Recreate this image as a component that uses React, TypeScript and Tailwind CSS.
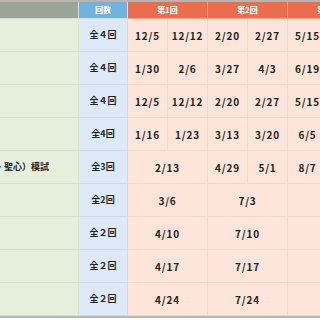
import React from 'react';

type Cell = { text?: string; span?: number };
type Row = { count: string; label?: string; first: Cell[]; second: Cell[]; third: Cell[] };

const rows: Row[] = [
  { count: '全４回', first: [{ text: '12/5' }, { text: '12/12' }], second: [{ text: '2/20' }, { text: '2/27' }], third: [{ text: '5/15' }, {}] },
  { count: '全４回', first: [{ text: '1/30' }, { text: '2/6' }], second: [{ text: '3/27' }, { text: '4/3' }], third: [{ text: '6/19' }, {}] },
  { count: '全４回', first: [{ text: '12/5' }, { text: '12/12' }], second: [{ text: '2/20' }, { text: '2/27' }], third: [{ text: '5/15' }, {}] },
  { count: '全4回', first: [{ text: '1/16' }, { text: '1/23' }], second: [{ text: '3/13' }, { text: '3/20' }], third: [{ text: '6/5' }, {}] },
  { count: '全3回', label: '雙葉・聖心）模試', first: [{ text: '2/13', span: 2 }], second: [{ text: '4/29' }, { text: '5/1' }], third: [{ text: '8/7' }, {}] },
  { count: '全2回', first: [{ text: '3/6', span: 2 }], second: [{ text: '7/3', span: 2 }], third: [{ span: 2 }] },
  { count: '全２回', first: [{ text: '4/10', span: 2 }], second: [{ text: '7/10', span: 2 }], third: [{ span: 2 }] },
  { count: '全２回', first: [{ text: '4/17', span: 2 }], second: [{ text: '7/17', span: 2 }], third: [{ span: 2 }] },
  { count: '全２回', first: [{ text: '4/24', span: 2 }], second: [{ text: '7/24', span: 2 }], third: [{ span: 2 }] },
];

const DateCells = ({ cells }: { cells: Cell[] }) => (
  <>
    {cells.map((c, i) => (
      <div
        key={i}
        className={`${c.span === 2 ? 'col-span-2' : ''} flex items-center justify-center border-r border-b border-[#f0d9cd] bg-[#fde5d9] text-[10px] font-bold tracking-[0.08em] text-[#222]`}
      >
        {c.text}
      </div>
    ))}
  </>
);

export default function App() {
  return (
    <div
      className="w-[320px] h-[320px] overflow-hidden bg-white"
      style={{ fontFamily: '"Noto Sans CJK JP", "Noto Sans", sans-serif' }}
    >
      <div className="w-[368px] border-t-2 border-[#bbb4ae]">
        <div className="grid grid-cols-[79px_49px_40px_40px_40px_40px_40px_40px] grid-rows-[17px_repeat(9,33px)]">
          {/* Header */}
          <div className="bg-[#9ba597] border-r border-b border-[#d9ddd6]" />
          <div className="flex items-center justify-center bg-[#6fb3e0] border-r border-b border-[#cfe3f2] text-[8px] font-bold text-white">
            回数
          </div>
          <div className="col-span-2 flex items-center justify-center bg-[#ea6e4d] border-r border-b border-[#f3a58e] text-[8px] font-bold text-white">
            第1回
          </div>
          <div className="col-span-2 flex items-center justify-center bg-[#ea6e4d] border-r border-b border-[#f3a58e] text-[8px] font-bold text-white">
            第2回
          </div>
          <div className="col-span-2 flex items-center justify-center bg-[#ea6e4d] border-r border-b border-[#f3a58e] text-[8px] font-bold text-white">
            第3回
          </div>

          {/* Body */}
          {rows.map((r, i) => (
            <React.Fragment key={i}>
              <div className="flex items-center justify-end overflow-hidden whitespace-nowrap pr-[29px] bg-[#e5efdb] border-r border-b border-[#d6e2cd] text-[9px] font-bold text-[#222]">
                {r.label}
              </div>
              <div className="flex items-center justify-center bg-[#dde9f6] border-r border-b border-[#cddbe9] text-[9px] font-bold text-[#222]">
                {r.count}
              </div>
              <DateCells cells={r.first} />
              <DateCells cells={r.second} />
              <DateCells cells={r.third} />
            </React.Fragment>
          ))}
        </div>
        <div className="h-[2px] bg-[#bbb4ae]" />
      </div>
    </div>
  );
}
